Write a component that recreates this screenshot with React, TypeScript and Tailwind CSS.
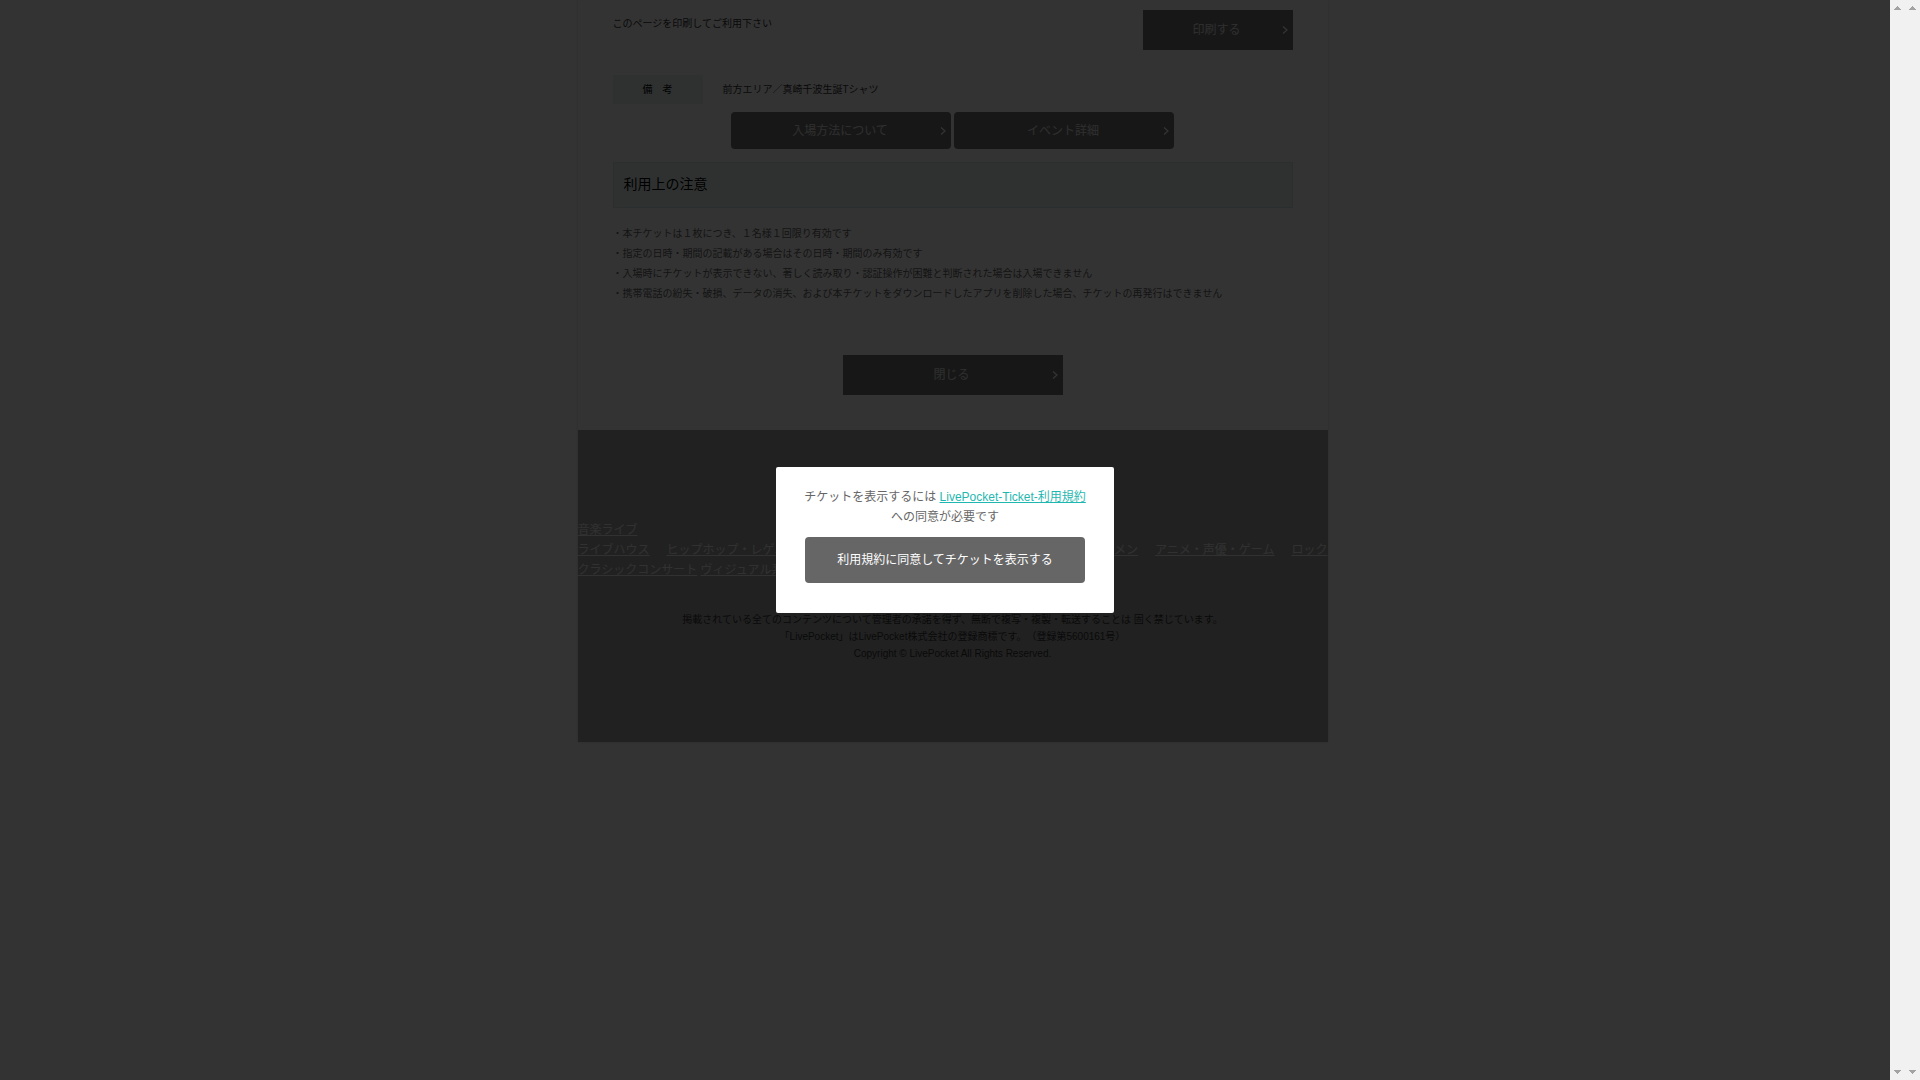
import type { ReactNode } from "react";

const notes = [
  "・本チケットは１枚につき、１名様１回限り有効です",
  "・指定の日時・期間の記載がある場合はその日時・期間のみ有効です",
  "・入場時にチケットが表示できない、著しく読み取り・認証操作が困難と判断された場合は入場できません",
  "・携帯電話の紛失・破損、データの消失、および本チケットをダウンロードしたアプリを削除した場合、チケットの再発行はできません",
];

const genreGroups = [
  ["ライブハウス", "ヒップホップ・レゲエ"],
  ["イケメン", "アニメ・声優・ゲーム", "ロック"],
];

function ArrowButton({ className, children }: { className: string; children: ReactNode }) {
  return (
    <button
      type="button"
      className={`flex items-center bg-[#737373] pl-2.5 pr-1 text-xs text-[#e6e6e6] ${className}`}
    >
      <span className="flex-1 text-center">{children}</span>
      <svg width="8" height="8" viewBox="0 0 8 8" fill="none" aria-hidden="true">
        <path d="M2 0.5 L6 4 L2 7.5" stroke="#fff" strokeWidth="1.2" />
      </svg>
    </button>
  );
}

function ScrollTrack() {
  return (
    <div className="flex w-[15px] shrink-0 flex-col items-center justify-between bg-[#f1f1f1] py-1.5" aria-hidden="true">
      <svg width="7" height="4" viewBox="0 0 7 4" shapeRendering="crispEdges">
        <path d="M3 0h1v1h1v1h1v1h1v1H0V3h1V2h1V1h1z" fill="#a3a3a3" />
      </svg>
      <svg width="7" height="4" viewBox="0 0 7 4" shapeRendering="crispEdges">
        <path d="M0 0h7v1H6v1H5v1H4v1H3V3H2V2H1V1H0z" fill="#a3a3a3" />
      </svg>
    </div>
  );
}

function TicketPage() {
  return (
    <div className="mx-auto w-full max-w-[750px] bg-white shadow-[0_0_3px_rgba(0,0,0,0.15)]">
      <main className="px-[35px] pb-[35px] pt-2.5">
        <div className="flex items-start justify-between">
          <p className="pt-1 text-[10px] leading-5 text-[#333]">このページを印刷してご利用下さい</p>
          <ArrowButton className="h-10 w-[150px]">印刷する</ArrowButton>
        </div>

        <dl className="mt-[25px] flex items-center gap-5 text-[10px]">
          <dt className="h-[29px] w-[90px] bg-[#eaf5f3] text-center leading-[29px] text-black">備　考</dt>
          <dd className="leading-7 text-[#333]">前方エリア／真崎千波生誕Tシャツ</dd>
        </dl>

        <div className="mt-2 flex justify-center gap-[3px]">
          <ArrowButton className="h-[37px] w-[220px] rounded">入場方法について</ArrowButton>
          <ArrowButton className="h-[37px] w-[220px] rounded">イベント詳細</ArrowButton>
        </div>

        <h2 className="mt-[13px] border border-[#d7e6e3] bg-[#eaf5f3] px-2.5 pb-0.5 text-sm leading-[42px] text-black">
          利用上の注意
        </h2>
        <ul className="mt-4 text-[10px] leading-5 text-[#666]">
          {notes.map((note) => (
            <li key={note}>{note}</li>
          ))}
        </ul>

        <div className="mt-[51px] flex justify-center">
          <ArrowButton className="h-10 w-[220px]">閉じる</ArrowButton>
        </div>
      </main>

      <footer className="bg-[#a5a5a5] pb-20 pt-[90px]">
        <nav className="text-xs leading-5 text-[#f2f2f2]">
          <a href="#" className="underline">音楽ライブ</a>
          <div className="flex justify-between whitespace-nowrap">
            {genreGroups.map((group) => (
              <div key={group[0]} className="flex gap-[17px]">
                {group.map((genre) => (
                  <a key={genre} href="#" className="underline">{genre}</a>
                ))}
              </div>
            ))}
          </div>
          <a href="#" className="underline">クラシックコンサート</a>{" "}
          <a href="#" className="underline">ヴィジュアル系</a>
        </nav>
        <div className="mt-[31px] text-center text-[10px] leading-[17px] text-[#333]">
          <p>掲載されている全てのコンテンツについて管理者の承諾を得ず、無断で複写・複製・転送することは 固く禁じています。</p>
          <p>「LivePocket」はLivePocket株式会社の登録商標です。（登録第5600161号）</p>
          <p>Copyright © LivePocket All Rights Reserved.</p>
        </div>
      </footer>
    </div>
  );
}

function TermsDialog() {
  return (
    <div
      role="dialog"
      aria-modal="true"
      className="w-[338px] rounded-xs bg-white pb-[30px] pt-5 text-center text-xs leading-5 text-[#666]"
    >
      <p>
        チケットを表示するには{" "}
        <a href="#" className="text-[#1fb8b0] underline">LivePocket-Ticket-利用規約</a>
        <br />
        への同意が必要です
      </p>
      <button type="button" className="mt-2.5 h-[46px] w-[280px] rounded bg-[#666] text-white">
        利用規約に同意してチケットを表示する
      </button>
    </div>
  );
}

export default function App() {
  return (
    <div className="flex min-h-screen bg-white font-['Liberation_Sans','Noto_Sans_CJK_JP',sans-serif] [text-spacing-trim:space-all]">
      <div className="relative flex-1">
        <TicketPage />
        <div className="absolute inset-0 flex">
          <div className="flex flex-1 items-center justify-center bg-black/80">
            <TermsDialog />
          </div>
          <ScrollTrack />
        </div>
      </div>
      <ScrollTrack />
    </div>
  );
}
